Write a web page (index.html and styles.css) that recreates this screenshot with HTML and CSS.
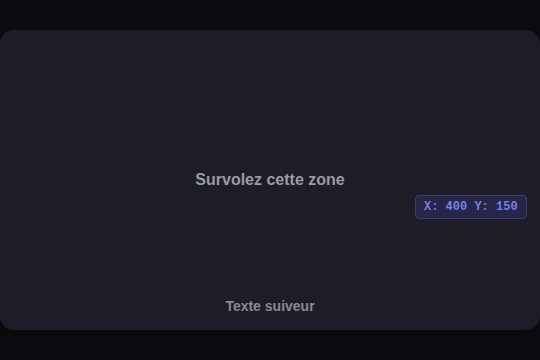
FILE: index.html
```html
<!DOCTYPE html>
<html lang="fr">
<head>
<meta charset="utf-8">
<link rel="stylesheet" href="styles.css">
</head>
<body>
<div class="stage">
  <div class="zone">
    <div class="zone-center">
      <span class="zone-title">Survolez cette zone</span>
    </div>
    <div class="zone-footer">Texte suiveur</div>
    <div class="coords">X: 400 Y: 150</div>
  </div>
</div>
</body>
</html>
```
FILE: styles.css
```css
html, body {
  margin: 0;
  padding: 0;
  width: 540px;
  height: 360px;
  background: #0c0c11;
  overflow: hidden;
  font-family: "Liberation Sans", Arial, sans-serif;
}
.stage {
  padding-top: 30px;
}
.zone {
  position: relative;
  height: 300px;
  background: #1c1d26;
  border-radius: 14px;
  display: flex;
  flex-direction: column;
  box-shadow: 0 4px 18px rgba(0,0,0,0.35);
}
.zone-center {
  flex: 1;
  display: flex;
  align-items: center;
  justify-content: center;
  padding-top: 32px;
}
.zone-title {
  font-size: 16px;
  font-weight: bold;
  color: #9b9ba7;
}
.zone-footer {
  text-align: center;
  font-size: 14px;
  font-weight: bold;
  color: #898a94;
  padding-bottom: 16px;
  line-height: 16px;
}
.coords {
  position: absolute;
  left: 415px;
  top: 165px;
  height: 22px;
  padding: 0 8px;
  display: flex;
  align-items: center;
  background: #252648;
  border: 1px solid #3c3d6e;
  border-radius: 4px;
  font-family: "Liberation Mono", "Courier New", monospace;
  font-weight: bold;
  font-size: 12px;
  color: #7d7ee6;
  white-space: pre;
}
```
